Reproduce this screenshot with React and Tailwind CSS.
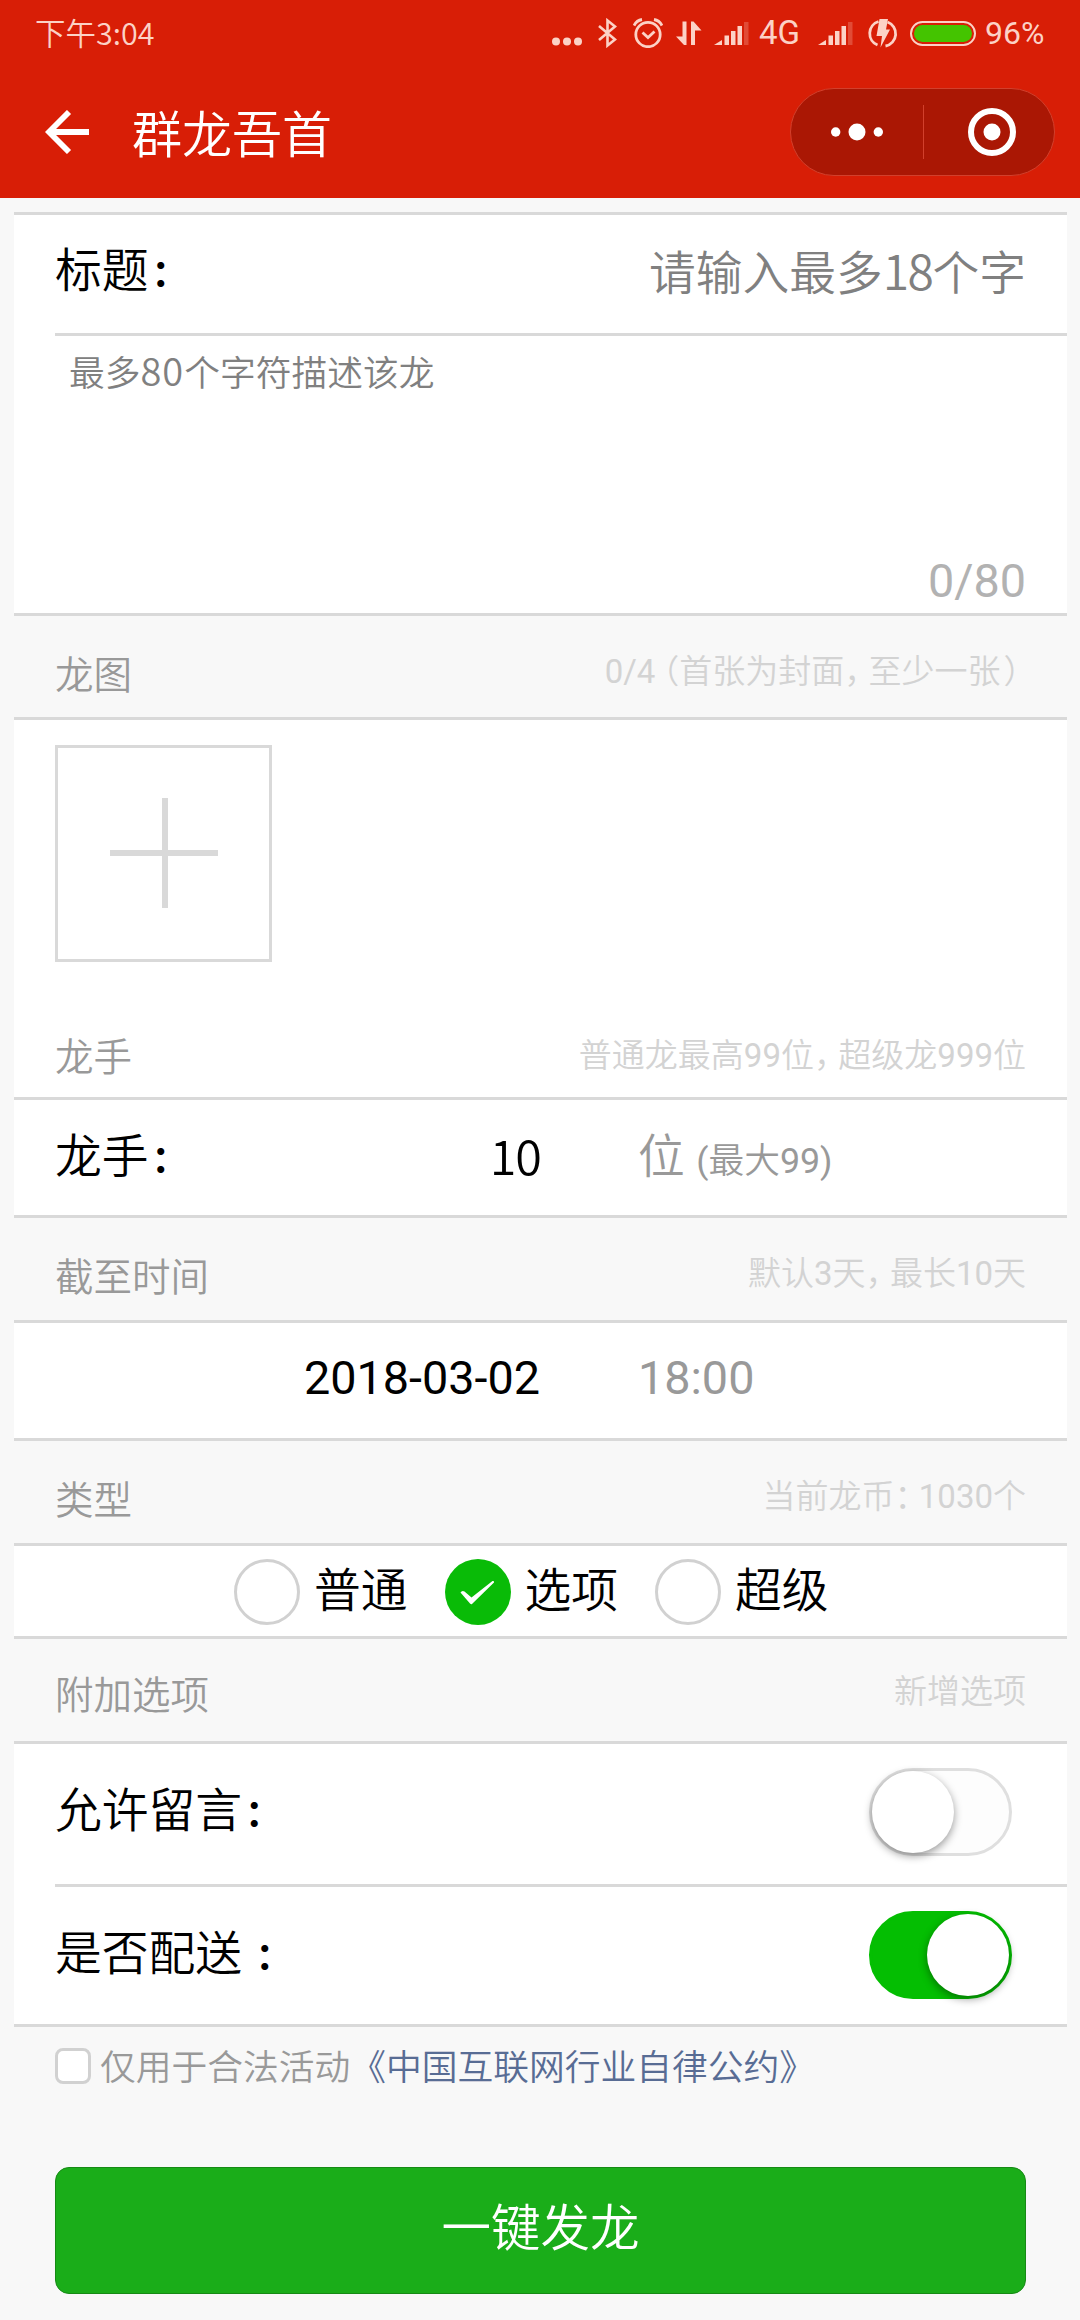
import { useState } from 'react';

const CJK = "font-['Noto_Sans_CJK_SC',sans-serif]";
const MIX = "font-['Roboto','Noto_Sans_CJK_SC',sans-serif]";

// full-width punctuation takes three quarters of an em
function Punct({ children }) {
  return <span className="tracking-[-0.26em]">{children}</span>;
}

function Num({ children }) {
  return <span className="font-normal">{children}</span>;
}

function Colon() {
  return <span className="ml-[3px] text-[37px] font-bold">：</span>;
}

function Signal() {
  return (
    <svg width="35" height="25" viewBox="0 0 35 25" fill="currentColor">
      <path d="M0 24L8 19V24Z" />
      <rect x="10.5" y="14.5" width="4.5" height="9.5" />
      <rect x="17" y="10" width="4.5" height="14" />
      <rect x="23.5" y="5" width="4.5" height="19" />
      <rect x="30" y="1" width="4.5" height="23" opacity="0.25" />
    </svg>
  );
}

function StatusBar() {
  return (
    <div className="flex h-[66px] items-center whitespace-nowrap pl-[35px] leading-[66px] text-[#fcd2c6]">
      <span className={`w-[517px] shrink-0 pb-[2px] text-[30.500px] font-[350] ${CJK}`}>下午3:04</span>
      <svg width="30" height="30" viewBox="0 0 30 30" fill="currentColor">
        <circle cx="4" cy="23.5" r="4" />
        <circle cx="15" cy="23.5" r="4" />
        <circle cx="26" cy="23.5" r="4" />
      </svg>
      <svg className="ml-[16px]" width="19" height="30" viewBox="0 0 19 30" fill="none" stroke="currentColor" strokeWidth="2.6">
        <path d="M1 8L17 21.5L9.5 27.5V2.5L17 8.5L1 22" />
      </svg>
      <svg className="ml-[16px]" width="30" height="30" viewBox="0 0 30 30" fill="none" stroke="currentColor" strokeWidth="2.8">
        <circle cx="15" cy="16.5" r="12.2" />
        <path d="M9.5 14.5L15 19.5L21.5 13.5" />
        <path d="M1 7.5Q3.5 2.5 9 1.5M29 7.5Q26.5 2.5 21 1.5" />
      </svg>
      <svg className="ml-[13px]" width="26" height="25" viewBox="0 0 26 25" fill="currentColor">
        <path d="M6.5 0.5H10.5V24H8L0 15.5H6.5Z" />
        <path d="M15 0.5H17.5L25.5 9.5H19V24H15Z" />
      </svg>
      <div className="ml-[12px]"><Signal /></div>
      <span className={`ml-[10px] w-[42px] text-[33px] ${MIX}`}>4G</span>
      <div className="ml-[17px]"><Signal /></div>
      <svg className="ml-[15px]" width="30" height="30" viewBox="0 0 30 30">
        <path d="M10.5 3.5A12.5 12.5 0 0 0 9.5 27M19.5 4A12.5 12.5 0 0 1 17.5 28" fill="none" stroke="currentColor" strokeWidth="2.8" />
        <path d="M11.5 1H20L18 11.5H22L12.5 29.5L14 18H8.5Z" fill="currentColor" />
      </svg>
      <div className="ml-[12px] h-[25px] w-[66px] rounded-full border-2 border-[#fcd2c6] p-[2px]">
        <div className="h-full rounded-full bg-[#44c400]" />
      </div>
      <span className={`ml-[9px] text-[32px] ${MIX}`}>96%</span>
    </div>
  );
}

function NavBar() {
  return (
    <div className="flex h-[132px] pl-[45px] pr-[25px]">
      <svg className="mt-[44px]" width="44" height="44" viewBox="0 0 44 44" fill="none" stroke="#fff" strokeWidth="5.8">
        <path d="M44 22H4M24 2L4 22L24 42" />
      </svg>
      <h1 className={`ml-[43px] mt-[35px] flex-1 text-[50px] font-[350] leading-[60px] text-white ${CJK}`}>群龙吾首</h1>
      <div className="mt-[22px] flex h-[88px] w-[265px] items-center rounded-full border border-[#d2402c] bg-[#aa1704]">
        <svg className="w-[132px]" height="20" viewBox="0 0 52 20" fill="#fff">
          <circle cx="4.7" cy="10" r="4.7" />
          <circle cx="26" cy="10" r="8.5" />
          <circle cx="47.3" cy="10" r="4.7" />
        </svg>
        <div className="h-[54px] w-px bg-[#d2402c]" />
        <svg className="ml-[44px]" width="48" height="48" viewBox="0 0 48 48">
          <circle cx="24" cy="24" r="21" fill="none" stroke="#fff" strokeWidth="6" />
          <circle cx="24" cy="24" r="8.5" fill="#fff" />
        </svg>
      </div>
    </div>
  );
}

function SectionTitle({ title, hint, className = 'h-[102px] pt-[36px]', hintClass = '' }) {
  return (
    <div className={`flex justify-between whitespace-nowrap pl-[41px] pr-[41px] ${className}`}>
      <span className={`text-[38.500px] leading-[40px] text-[#999] ${CJK}`}>{title}</span>
      <span className={`text-[33px] leading-[40px] text-[#d3d3d3] ${MIX} ${hintClass}`}>{hint}</span>
    </div>
  );
}

function Switch({ on, onClick }) {
  return (
    <button
      onClick={onClick}
      className={`mr-[14px] flex h-[88px] w-[143px] items-center rounded-full border-[3px] ${on ? 'justify-end border-[#04be02] bg-[#04be02]' : 'border-[#dfdfdf] bg-[#fdfdfd]'}`}
    >
      <span className="size-[82px] rounded-full bg-white shadow-[0_3px_8px_rgba(0,0,0,0.4)]" />
    </button>
  );
}

function Radio({ label, checked, onClick }) {
  return (
    <button onClick={onClick} className="flex">
      {checked ? (
        <svg width="66" height="66" viewBox="0 0 66 66">
          <circle cx="33" cy="33" r="33" fill="#09bb07" />
          <path d="M15.5 33.5Q17 31 19.5 32.5L26.5 38.5L47.5 22Q49.5 21.5 49 23.5L27 45Q26 45.7 25 44.5Z" fill="#fff" />
        </svg>
      ) : (
        <span className="size-[66px] rounded-full border-[3px] border-[#d1d1d1] bg-white" />
      )}
      <span className="ml-[14px] mt-[4px]">{label}</span>
    </button>
  );
}

const types = ['普通', '选项', '超级'];

export default function App() {
  const [type, setType] = useState('选项');
  const [comment, setComment] = useState(false);
  const [delivery, setDelivery] = useState(true);

  return (
    <div className="h-[2320px] w-[1080px] overflow-hidden bg-[#f8f8f8]">
      <header className="bg-[#d81e06]">
        <StatusBar />
        <NavBar />
      </header>

      <main className={`ml-[14px] mr-[13px] mt-[14px] text-[46.750px] font-[350] leading-[48px] text-black ${CJK}`}>
        <section className="border-y-[3px] border-[#d9d9d9] bg-white pl-[41px]">
          <div className="flex h-[121px] justify-between border-b-[3px] border-[#d9d9d9] pr-[41px] pt-[28px]">
            <span>标题<Colon /></span>
            <span className="mt-[2px] text-[#808080]">
              请输入最多<span className="text-[48px] tracking-[-1.500px]">18</span>个字
            </span>
          </div>
          <div className="flex h-[277px] flex-col justify-between pl-[14px] pr-[41px] pt-[14px]">
            <p className="text-[35.750px] leading-[40px] text-[#808080]">
              最多<span className="text-[38px] tracking-[1px]">80</span>个字符描述该龙
            </p>
            <p className={`mb-[8px] text-right font-normal text-[#b2b2b2] ${MIX}`}>0/80</p>
          </div>
        </section>

        <SectionTitle
          title="龙图"
          hint={<><Num>0/4</Num><span className="-ml-[0.280em]">（</span>首张为封面<Punct>，</Punct>至少一张<span className="ml-[3px] tracking-[-0.260em]">）</span></>}
          className="h-[101px] pt-[36px]"
          hintClass="-mr-[2px]"
        />

        <section className="h-[380px] border-t-[3px] border-[#d9d9d9] bg-white pt-[25px]">
          <button className="ml-[41px] flex size-[217px] items-center justify-center border-[3px] border-[#d9d9d9]">
            <svg width="111" height="111" viewBox="0 0 111 111" fill="#d9d9d9">
              <rect x="54" y="0" width="6" height="110" />
              <rect x="2" y="52" width="108" height="6" />
            </svg>
          </button>
          <SectionTitle
            title="龙手"
            hint={<>普通龙最高<Num>99</Num>位<Punct>，</Punct>超级龙<Num>999</Num>位</>}
            className="pt-[72px]"
            hintClass="mt-[2px]"
          />
        </section>

        <section className="flex h-[121px] border-y-[3px] border-[#d9d9d9] bg-white pl-[41px] pt-[29px]">
          <span className="w-[300px]">龙手<Colon /></span>
          <span className="mt-[1px] w-[186px] text-right text-[48.500px] tracking-[-1px]">10</span>
          <span className={`ml-[97px] mt-[4px] text-[#999] ${MIX}`}>
            位 <span className="text-[35.750px]"><Num>(</Num>最大<Num>99)</Num></span>
          </span>
        </section>

        <SectionTitle title="截至时间" hint={<>默认<Num>3</Num>天<Punct>，</Punct>最长<Num>10</Num>天</>} />

        <section className={`flex h-[121px] border-y-[3px] border-[#d9d9d9] bg-white pt-[31px] font-normal ${MIX}`}>
          <span className="w-[526px] text-right">2018-03-02</span>
          <span className="ml-[98px] text-[#999]">18:00</span>
        </section>

        <SectionTitle title="类型" hint={<>当前龙币<Punct>：</Punct><Num>1030</Num>个</>} />

        <section className="flex h-[96px] gap-[37px] border-y-[3px] border-[#d9d9d9] bg-white pl-[220px] pt-[13px]">
          {types.map((t) => (
            <Radio key={t} label={t} checked={type === t} onClick={() => setType(t)} />
          ))}
        </section>

        <SectionTitle title="附加选项" hint="新增选项" className="h-[102px] pt-[33px]" />

        <section className="border-y-[3px] border-[#d9d9d9] bg-white pl-[41px]">
          <div className="flex h-[143px] justify-between border-b-[3px] border-[#d9d9d9] pr-[41px] pt-[24px]">
            <span className="mt-[15px]">允许留言<Colon /></span>
            <Switch on={comment} onClick={() => setComment(!comment)} />
          </div>
          <div className="flex h-[137px] justify-between pr-[41px] pt-[24px]">
            <span className="mt-[15px]">是否配送 <Colon /></span>
            <Switch on={delivery} onClick={() => setDelivery(!delivery)} />
          </div>
        </section>

        <div className="ml-[41px] mt-[21px] flex h-[36px] text-[35.750px] leading-[34px]">
          <span className="size-[36px] rounded-[8px] border-[3px] border-[#d1d1d1] bg-white" />
          <span className="ml-[9px] text-[#999]">仅用于合法活动</span>
          <a className="text-[#586c94]">《中国互联网行业自律公约》</a>
        </div>

        <button className="ml-[41px] mt-[83px] block h-[127px] w-[971px] rounded-[14px] border border-[#168a15] bg-[#1aad19] pb-[12px] text-[49.500px] leading-[60px] text-white">
          一键发龙
        </button>
      </main>
    </div>
  );
}
